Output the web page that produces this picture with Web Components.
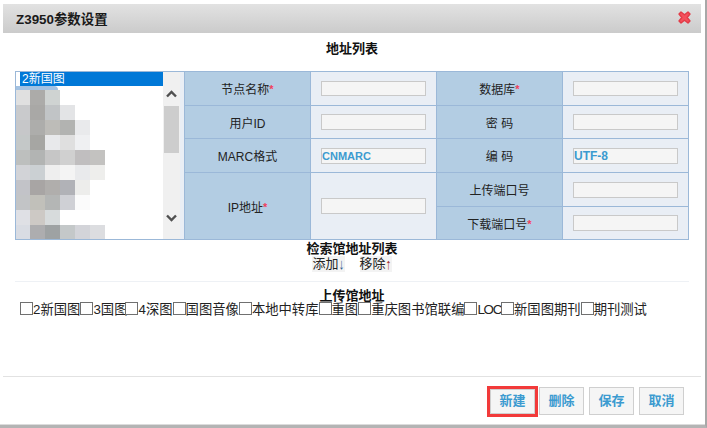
<!DOCTYPE html>
<html><head><meta charset="utf-8">
<style>
html,body{margin:0;padding:0;height:100%;overflow:hidden}
body{background:#fff;font:13px "Liberation Sans","Noto Sans CJK SC",sans-serif;color:#222}
</style></head><body>
<z-dialog>
  <span slot="title">Z3950参数设置</span>
  <z-heading>地址列表</z-heading>
  <z-form></z-form>
  <z-heading tight>检索馆地址列表</z-heading>
  <z-transfer></z-transfer>
  <z-heading rule>上传馆地址</z-heading>
  <z-checks></z-checks>
  <z-btn slot="footer" hot>新建</z-btn>
  <z-btn slot="footer">删除</z-btn>
  <z-btn slot="footer">保存</z-btn>
  <z-btn slot="footer">取消</z-btn>
</z-dialog>
<script>
const def=(n,css,html)=>{customElements.define(n,class extends HTMLElement{
  connectedCallback(){ if(this.shadowRoot)return; const r=this.attachShadow({mode:'open'}); r.innerHTML=`<style>${css}</style>${html}`; }
});};

def('z-dialog',`
:host{display:flex;flex-direction:column;box-sizing:border-box;width:707px;height:428px;background:#fff;padding:4px 0 1px 3px;border-right:2px solid #a8a8a8;border-bottom:3px solid #b4b4b4;box-shadow:inset 0 -1px #dcdcdc}
.win{flex:1;display:flex;flex-direction:column;background:#fff;min-height:0;width:698px}
header{height:29px;flex:none;display:flex;align-items:center;justify-content:space-between;padding:0 10px 2px 13px;box-sizing:border-box;background:linear-gradient(#e2e2e2,#cbcbcb);font-weight:bold;color:#1a1a1a;font-size:13.4px}
main{flex:1;padding:0 12px;min-height:0}
footer{flex:none;height:48px;border-top:1px solid #e2e2e2;display:flex;justify-content:flex-end;align-items:flex-start;gap:5px;padding:10px 17px 0 0;box-sizing:border-box}
svg{display:block;margin-top:-1px}
`,`<div class="win"><header><slot name="title"></slot><svg width="13" height="13" viewBox="0 0 13 13"><path d="M3 1 6.5 3.8 10 1 12 3 9.2 6.5 12 10 10 12 6.5 9.2 3 12 1 10 3.8 6.5 1 3Z" fill="#f4505c" stroke="#e23b47" stroke-width="1.4" stroke-linejoin="round"/></svg></header><main><slot></slot></main><footer><slot name="footer"></slot></footer></div>`);

def('z-heading',`
:host{display:block;text-align:center;font-weight:bold;font-size:13px;line-height:15px;color:#111;padding-top:8px}
:host([tight]){padding-top:1px}
:host([rule]){border-top:1px solid #eef1f5;margin-top:9px;padding-top:6px}
`,`<slot></slot>`);

const swatches=[
['#e0e0e0','#acaba9','#cfd3d2'],
['#c9cacc','#a9a8a6','#c1c4c6','#e3e4e6'],
['#c6c7c9','#adadab','#bdbcb8','#b2b3b1','#e9eaec'],
['#c4c8c8','#a6a6a3','#e8e9eb','#dfdfdf','#eff0f2'],
['#bdbfbe','#b2b4b3','#c6c6c6','#d0d0d0','#c0bebf','#c3c2c0'],
['#d2d3d7','#cbd0d3','#eeeeee','#f4f4f4','#e9eaec','#eeeeec'],
['#c2c3c8','#a8a5a4','#b0aeac','#b1b2b7','#ededeb'],
['#c2c4c6','#c1c0ba','#b4b6b5','#cfd0d5','#fbfbfb'],
['#dfe0e5','#cdc9c5','#d7dbdc'],
['#d9dce3','#adadaf','#9ea2a3','#c4c8c9','#d3d4d9','#dcdde0']];
const mosaic=swatches.map(r=>Array.from({length:6},(_,i)=>`<i style="background:${r[i]||'#fff'}"></i>`).join('')).join('');

const cell=(label,star,val,h,cls='')=>`<div class="l">${label}${star?'<b>*</b>':''}</div><div class="v"><span class="inp ${cls}" style="height:${h}px">${val||''}</span></div>`;
def('z-form',`
:host{box-sizing:border-box;margin-top:15px;width:674px;height:169px;border:1px solid #9bb8d8;display:grid;grid-template-columns:168px 1fr;background:#e9eef5}
.list{display:grid;grid-template-columns:147px 17px 4px;height:167px;overflow:hidden;background:#fff}
.opts{min-width:0;overflow:hidden}
.sel{margin-left:4px;height:14px;background:#0078d7;color:#fff;font-size:12px;line-height:14px;padding-left:2px}
.cap{height:4px;width:42px;background:#a3c2e2;border-radius:0 4px 0 0}
.mos{display:grid;grid-template-columns:14px repeat(5,15px);grid-auto-rows:15px}
.sb{background:#f0f0f0;display:grid;grid-template-rows:34px 47px 1fr;justify-items:center}
.up{align-self:end;margin-bottom:8px}
.dn{align-self:end;margin-bottom:17px}
.thumb{width:15px;height:47px;background:#cdcdcd}
.gut{background:#e9eef5}
.tbl{display:grid;grid-template-columns:repeat(4,126px);grid-template-rows:34px 33px 34px 34px 32px;background:#e9eef5}
.l,.v{border-left:1px solid #9bb8d8;border-bottom:1px solid #9bb8d8;display:flex;align-items:center;justify-content:center;box-sizing:border-box}
.l{background:#b3cde3;font-size:12px;color:#222}
.l b{color:#f0405e;font-weight:bold;font-size:11px;margin-top:1px}
.inp{display:block;box-sizing:border-box;width:105px;border:1px solid #c9c9c9;background:#f5f5f5;color:#3c9bd0;font-weight:bold;font-size:12px;line-height:14px;overflow:hidden}
.sm{font-size:11px}
.ip{grid-row:4/6}
.nb{border-bottom:0}
svg{display:block}
`,`<div class="list"><div class="opts"><div class="sel">2新国图</div><div class="cap"></div><div class="mos">${mosaic}</div></div>
<div class="sb"><svg class="up" width="11" height="8" viewBox="0 0 11 8"><path d="M1 6.5 5.5 2 10 6.5" fill="none" stroke="#505050" stroke-width="2.4"/></svg><div class="thumb"></div><svg class="dn" width="11" height="8" viewBox="0 0 11 8"><path d="M1 1.5 5.5 6 10 1.5" fill="none" stroke="#505050" stroke-width="2.4"/></svg></div><div class="gut"></div></div>
<div class="tbl">
${cell('节点名称',1,'',15)}${cell('数据库',1,'',15)}
${cell('用户ID',0,'',16)}${cell('密 码',0,'',16)}
${cell('MARC格式',0,'CNMARC',16,'sm')}${cell('编 码',0,'UTF-8',16)}
<div class="l ip nb">IP地址<b>*</b></div><div class="v ip nb"><span class="inp" style="height:16px"></span></div>
<div class="l">上传端口号</div><div class="v"><span class="inp" style="height:16px"></span></div>
<div class="l nb" style="grid-column:3">下载端口号<b>*</b></div><div class="v nb" style="grid-column:4"><span class="inp" style="height:16px"></span></div>
</div>`);

def('z-transfer',`
:host{display:flex;justify-content:center;gap:15px;font-size:13px;line-height:16px;height:16px;color:#222}
span{background:#f3f3f3;display:inline-flex;height:16px}
i,em{display:block;font-style:normal;font-weight:bold;font-size:12px;line-height:16px;height:16px;overflow:hidden;transform:scaleY(1.25)}
i{color:#a02a2a}
em{color:#33618f}
`,`<span>添加<em>↓</em></span><span>移除<i>↑</i></span>`);

def('z-checks',`
:host{display:flex;font-size:13.33px;line-height:15px;padding-left:5px;margin-top:-1px;color:#222;white-space:nowrap}
span{display:inline-flex;align-items:flex-start}
u{display:block;box-sizing:border-box;width:13px;height:13px;border:1px solid #707070;background:#fff}
a{letter-spacing:-1.3px}
.n3{margin-right:-2px}
`,['2新国图','3国图','4深图','国图音像','本地中转库','重图','重庆图书馆联编','<a>LOC</a>','新国图期刊','期刊测试'].map(t=>`<span class="${t[0]==='3'?'n3':''}"><u></u>${t}</span>`).join(''));

def('z-btn',`
:host{display:block;box-sizing:border-box;width:45px;height:28px;border:1px solid #cfcfcf;background:#f5f5f5;color:#3c9bd0;font-weight:bold;font-size:13px;line-height:26px;text-align:center}
:host([hot]){width:51px;height:31px;border:3px solid #f23a3a;margin-top:-1px;margin-right:-4px;line-height:24px;box-shadow:inset 0 0 0 1px #cfcfcf}
`,`<slot></slot>`);
</script>
</body></html>
